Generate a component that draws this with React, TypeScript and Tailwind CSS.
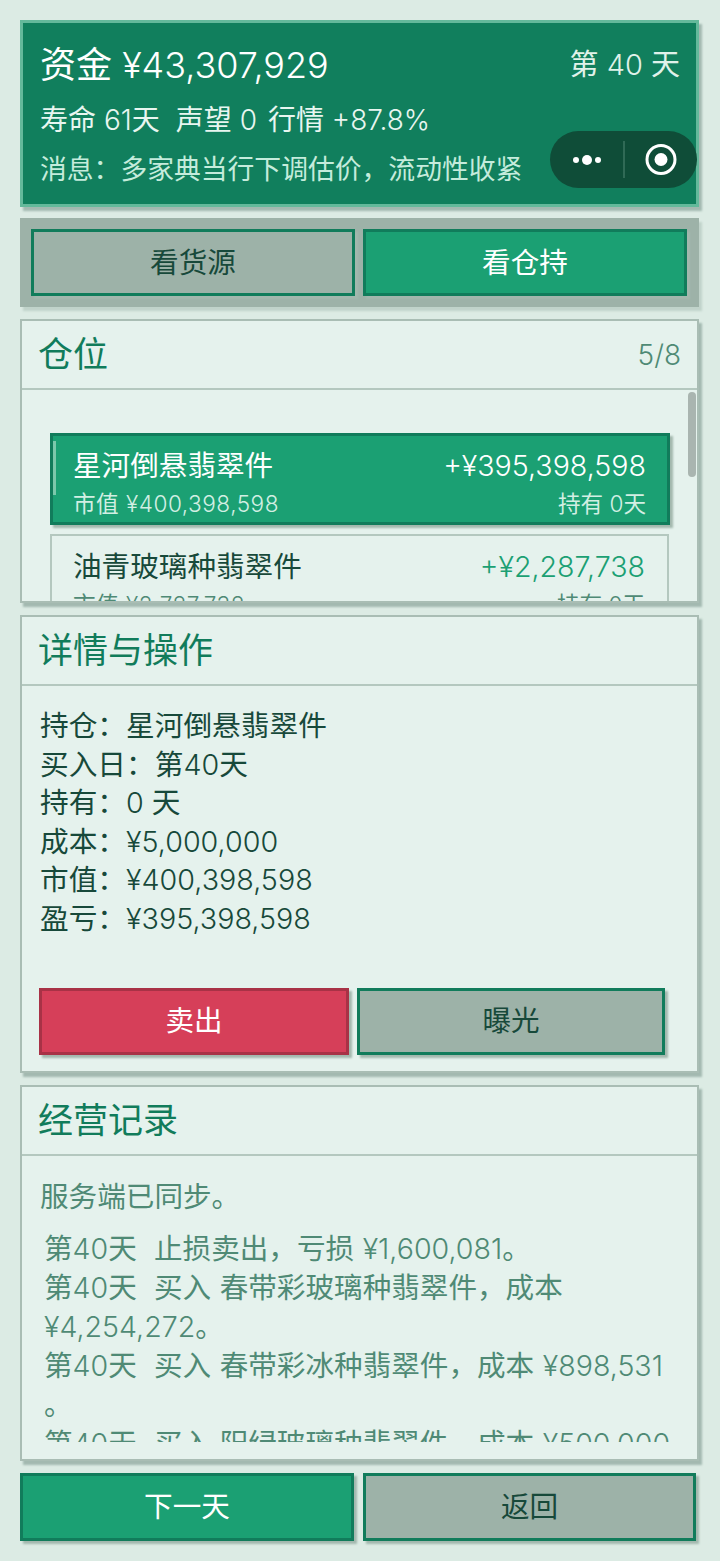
const font = { fontFamily: 'Inter, "Noto Sans CJK SC", sans-serif' };

const cardClass =
  "border-2 border-[#a9bdb4] bg-[#e5f2ed] shadow-[3px_4px_2px_#a3b9b0] overflow-hidden";

const Num = ({ children }: { children: string }) => (
  <span className="font-light">{children}</span>
);

const GameButton = ({
  label,
  kind,
  className,
}: {
  label: string;
  kind: "green" | "gray" | "red";
  className: string;
}) => {
  const colors = {
    green: "bg-[#1ba073] border-[#117c5b] text-white",
    gray: "bg-[#9db2a8] border-[#117c5b] text-[#17493a]",
    red: "bg-[#d63f59] border-[#a83246] text-white",
  };
  return (
    <button
      className={`flex items-center justify-center border-[3px] text-[28.6px] pt-[1px] shadow-[3px_3px_2px_#a3b8ae] ${colors[kind]} ${className}`}
    >
      {label}
    </button>
  );
};

const CardHeader = ({ title, right }: { title: string; right?: string }) => (
  <div className="h-[69px] flex items-center justify-between px-[16px] border-b-2 border-[#b4c8bf]">
    <span className="text-[35px] text-[#117c5b]">{title}</span>
    {right && <span className="text-[28px] font-light text-[#4f8a75]">{right}</span>}
  </div>
);

export default function App() {
  return (
    <div
      className="w-[720px] h-[1561px] bg-[#dcebe4] px-[20px] pt-[20px] overflow-hidden font-normal"
      style={font}
    >
      {/* top status */}
      <div className="relative w-[679px] h-[187px] bg-[#117f5d] border-[3px] border-[#64b99b] shadow-[3px_4px_2px_#a3b9b0] pl-[17px] pr-[16px] pt-[17px] text-white">
        <div className="flex items-center justify-between h-[50px]">
          <span className="text-[36px] leading-[50px]">资金 <Num>¥43,307,929</Num></span>
          <span className="text-[29px] text-[#e0f2ea]">第 <Num>40</Num> 天</span>
        </div>
        <div className="flex text-[28px] leading-[40px] mt-[10px] text-[#e8f6f0]">
          <span>寿命 <Num>61</Num>天</span>
          <span className="ml-[16px]">声望 <Num>0</Num></span>
          <span className="ml-[11px]">行情 <Num>+87.8%</Num></span>
        </div>
        <div className="text-[26.8px] leading-[36px] mt-[11px] text-[#c5ecdc]">
          消息：多家典当行下调估价，流动性收紧
        </div>
        <div className="absolute left-[527px] top-[108px] w-[147px] h-[57px] rounded-full bg-[#0f4d38] flex items-center">
          <svg width="147" height="57" viewBox="0 0 147 57">
            <circle cx="26" cy="29" r="3" fill="#fff" />
            <circle cx="37" cy="29" r="5" fill="#fff" />
            <circle cx="48" cy="29" r="3" fill="#fff" />
            <line x1="74" y1="10" x2="74" y2="47" stroke="#3d7561" strokeWidth="1.5" />
            <circle cx="111" cy="28.5" r="14" fill="none" stroke="#fff" strokeWidth="3" />
            <circle cx="111" cy="28.5" r="6.5" fill="#fff" />
          </svg>
        </div>
      </div>

      {/* tabs */}
      <div className="w-[679px] h-[89px] mt-[11px] bg-[#9db2a8] flex gap-[8px] pl-[11px] pt-[11px] shadow-[3px_4px_2px_#c0d3ca]">
        <GameButton label="看货源" kind="gray" className="w-[324px] h-[67px]" />
        <GameButton label="看仓持" kind="green" className="w-[324px] h-[67px]" />
      </div>

      {/* positions */}
      <div className={`${cardClass} relative w-[679px] h-[284px] mt-[12px]`}>
        <CardHeader title="仓位" right="5/8" />
        <div className="pl-[28px] pt-[43px]">
          <div className="relative w-[620px] h-[92px] bg-[#1ba073] border-[3px] border-[#117c5b] shadow-[3px_3px_2px_#a3b8ae] pl-[20px] pr-[21px] pt-[9px] text-white">
            <div className="absolute left-0 top-[5px] w-[3px] h-[54px] bg-[#7cc8ab]" />
            <div className="flex justify-between items-center text-[28.6px] leading-[42px]">
              <span>星河倒悬翡翠件</span>
              <Num>+¥395,398,598</Num>
            </div>
            <div className="flex justify-between items-center text-[22.6px] leading-[32px] mt-[1px] text-[#d2efe3]">
              <span className="tracking-[0.5px]">市值 <Num>¥400,398,598</Num></span>
              <span>持有 <Num>0</Num>天</span>
            </div>
          </div>
          <div className="w-[619px] h-[93px] mt-[9px] border-2 border-[#b4c8bf] pl-[21px] pr-[22px] pt-[10px]">
            <div className="flex justify-between items-center text-[28.6px] leading-[42px]">
              <span className="text-[#17493a]">油青玻璃种翡翠件</span>
              <span className="text-[#1ba073]"><Num>+¥2,287,738</Num></span>
            </div>
            <div className="flex justify-between items-center text-[22.6px] leading-[32px] mt-[1px] text-[#4f8a75]">
              <span className="tracking-[0.5px]">市值 <Num>¥2,787,738</Num></span>
              <span>持有 <Num>0</Num>天</span>
            </div>
          </div>
        </div>
        <div className="absolute right-[1px] top-[71px] w-[8px] h-[85px] rounded-full bg-[#a9b5b0]" />
      </div>

      {/* details */}
      <div className={`${cardClass} w-[679px] h-[458px] mt-[12px]`}>
        <CardHeader title="详情与操作" />
        <div className="pl-[18px] pt-[21px] text-[28.7px] leading-[38.6px] text-[#17493a]">
          <div>持仓：星河倒悬翡翠件</div>
          <div>买入日：第<Num>40</Num>天</div>
          <div>持有：<Num>0</Num> 天</div>
          <div>成本：<Num>¥5,000,000</Num></div>
          <div>市值：<Num>¥400,398,598</Num></div>
          <div>盈亏：<Num>¥395,398,598</Num></div>
        </div>
        <div className="flex gap-[8px] pl-[17px] mt-[49px]">
          <GameButton label="卖出" kind="red" className="w-[310px] h-[67px]" />
          <GameButton label="曝光" kind="gray" className="w-[308px] h-[67px]" />
        </div>
      </div>

      {/* log */}
      <div className={`${cardClass} w-[679px] h-[376px] mt-[12px]`}>
        <CardHeader title="经营记录" />
        <div className="pl-[18px] pt-[21px] text-[28.6px] text-[#4f8a75]">
          <div className="leading-[40px]">服务端已同步。</div>
          <div className="h-[213px] overflow-hidden mt-[12px] pl-[4px] leading-[39px] whitespace-nowrap [word-spacing:0.5px]">
            <div>第<Num>40</Num>天&nbsp;&nbsp;止损卖出，亏损 <Num>¥1,600,081</Num>。</div>
            <div>
              第<Num>40</Num>天&nbsp;&nbsp;买入 春带彩玻璃种翡翠件，成本
              <br />
              <Num>¥4,254,272</Num>。
            </div>
            <div>
              第<Num>40</Num>天&nbsp;&nbsp;买入 春带彩冰种翡翠件，成本 <Num>¥898,531</Num>
              <br />。
            </div>
            <div>第<Num>40</Num>天&nbsp;&nbsp;买入 阳绿玻璃种翡翠件，成本 <Num>¥500,000</Num></div>
          </div>
        </div>
      </div>

      {/* bottom buttons */}
      <div className="flex gap-[9px] mt-[12px]">
        <GameButton label="下一天" kind="green" className="w-[334px] h-[68px]" />
        <GameButton label="返回" kind="gray" className="w-[333px] h-[68px]" />
      </div>
    </div>
  );
}
